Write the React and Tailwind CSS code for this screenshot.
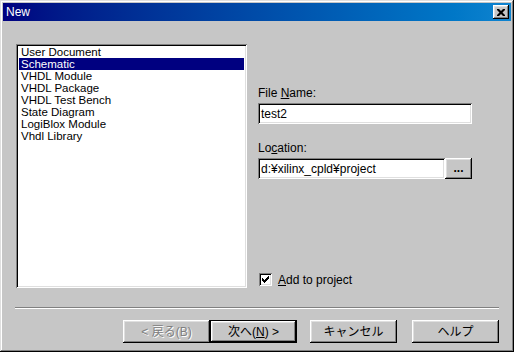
import React from 'react';

const raised =
  'shadow-[inset_-1px_-1px_#000,inset_1px_1px_#fff,inset_-2px_-2px_#808080,inset_2px_2px_#dfdfdf]';
const sunken =
  'shadow-[inset_1px_1px_#808080,inset_-1px_-1px_#fff,inset_2px_2px_#000,inset_-2px_-2px_#dfdfdf]';

const items = [
  'User Document',
  'Schematic',
  'VHDL Module',
  'VHDL Package',
  'VHDL Test Bench',
  'State Diagram',
  'LogiBlox Module',
  'Vhdl Library',
];

const Button = ({ children, disabled, isDefault, className = '' }) => (
  <div
    className={`h-[23px] w-[87px] flex items-center justify-center bg-[#c6c6c6] ${
      isDefault ? 'border border-black' : ''
    } ${className}`}
  >
    <div
      className={`w-full h-full flex items-center justify-center ${raised} ${
        disabled ? 'text-[#808080] [text-shadow:1px_1px_0_#fff]' : 'text-black'
      }`}
    >
      {children}
    </div>
  </div>
);

export default function App() {
  return (
    <div
      className="w-[514px] h-[352px] bg-[#c6c6c6] p-[3px] flex flex-col text-[12px] leading-[12px] text-black shadow-[inset_-1px_-1px_#000,inset_1px_1px_#dfdfdf,inset_-2px_-2px_#808080,inset_2px_2px_#fff]"
      style={{ fontFamily: '"Liberation Sans", "Noto Sans CJK JP", sans-serif' }}
    >
      {/* title bar */}
      <div className="h-[18px] flex items-center justify-between bg-gradient-to-r from-[#000080] to-[#1084d0] pl-[3px] pr-[2px]">
        <span className="text-white text-[12px]">New</span>
        <div className={`w-[16px] h-[14px] bg-[#c6c6c6] flex items-center justify-center ${raised}`}>
          <svg width="8" height="7" viewBox="0 0 8 7">
            <path d="M0 0h2l2 2 2-2h2v1l-2.5 2.5L8 6v1H6L4 5 2 7H0V6l2.5-2.5L0 1z" fill="#000" />
          </svg>
        </div>
      </div>

      {/* main area */}
      <div className="flex pl-[13px] pt-[23px]">
        <div className={`w-[231px] h-[244px] bg-white p-[2px] ${sunken}`}>
          {items.map((it, i) => (
            <div
              key={it}
              className={`h-[12px] text-[11.5px] leading-[12px] pl-[2px] ml-[1px] mr-[1px] overflow-hidden ${
                i === 1 ? 'bg-[#000080] text-white' : ''
              }`}
            >
              {it}
            </div>
          ))}
        </div>

        <div className="ml-[11px] w-[214px] flex flex-col">
          <div className="mt-[42px] h-[14px] leading-[14px]">
            File <u>N</u>ame:
          </div>
          <div className={`mt-[3px] h-[21px] w-[214px] bg-white flex items-center pl-[3px] ${sunken}`}>
            test2
          </div>
          <div className="mt-[17px] h-[14px] leading-[14px]">
            Lo<u>c</u>ation:
          </div>
          <div className="mt-[3px] flex">
            <div className={`h-[21px] w-[187px] bg-white flex items-center pl-[3px] ${sunken}`}>
              d:¥xilinx_cpld¥project
            </div>
            <div className={`h-[21px] w-[27px] flex items-end justify-center pb-[5px] font-bold ${raised}`}>
              ...
            </div>
          </div>
          <div className="mt-[94px] flex items-center">
            <div className={`ml-[1px] w-[13px] h-[13px] bg-white flex items-center justify-center ${sunken}`}>
              <svg width="7" height="7" viewBox="0 0 7 7">
                <path d="M0 2h1v1h1v1h1v-1h1v-1h1v-1h1v-1h1v3h-1v1h-1v1h-1v1h-1v1h-1v-1h-1v-1h-1z" fill="#000" />
              </svg>
            </div>
            <span className="ml-[6px]">
              <u>A</u>dd to project
            </span>
          </div>
        </div>
      </div>

      {/* separator */}
      <div className="mt-[19px] ml-[12px] w-[484px] h-[2px] border-t border-[#808080] border-b border-b-white" />

      {/* buttons */}
      <div className="mt-[11px] ml-[120px] flex">
        <Button disabled>&lt; 戻る(B)</Button>
        <Button isDefault>
          次へ(<u>N</u>) &gt;
        </Button>
        <Button className="ml-[13px]">キャンセル</Button>
        <Button className="ml-[15px]">ヘルプ</Button>
      </div>
    </div>
  );
}
